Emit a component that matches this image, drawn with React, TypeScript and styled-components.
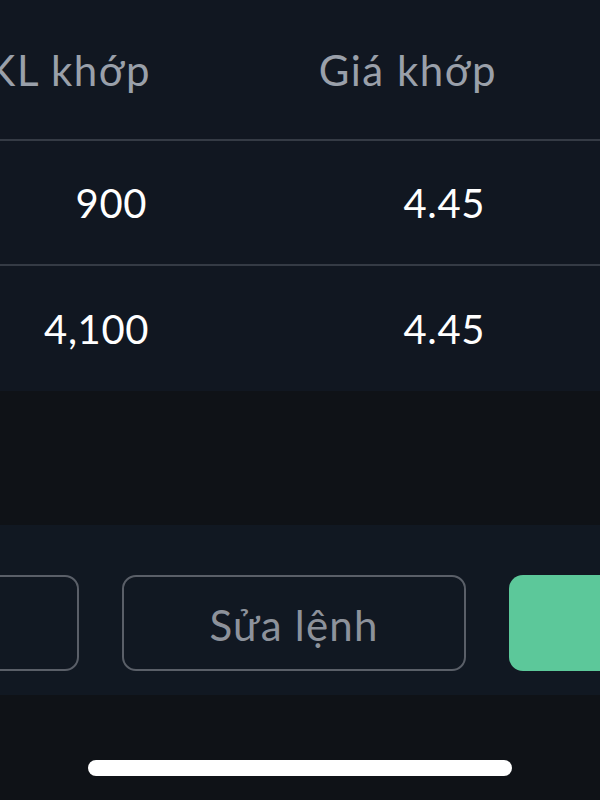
import React from "react";
import styled, { createGlobalStyle } from "styled-components";

const Global = createGlobalStyle`
  html, body { margin: 0; padding: 0; background: #0f1217; }
  * { box-sizing: border-box; }
`;

const Page = styled.div`
  width: 600px;
  height: 800px;
  overflow: hidden;
  background: #0f1217;
  font-family: Lato, "Noto Sans", sans-serif;
  display: flex;
  flex-direction: column;
`;

const Table = styled.div`
  background: #111721;
  display: flex;
  flex-direction: column;
`;

const Row = styled.div<{ $h: number; $divider?: boolean }>`
  height: ${(p) => p.$h}px;
  display: grid;
  grid-template-columns: 152px 346px 1fr;
  align-items: center;
  border-bottom: ${(p) => (p.$divider ? "2px solid #353b45" : "none")};
`;

const Cell = styled.div<{ $head?: boolean; $pad?: number }>`
  justify-self: end;
  white-space: nowrap;
  font-size: ${(p) => (p.$head ? 42 : 40)}px;
  color: ${(p) => (p.$head ? "#9aa0aa" : "#ffffff")};
  padding-right: ${(p) => p.$pad ?? 0}px;
  letter-spacing: ${(p) => (p.$head ? 1.5 : 0.6)}px;
`;

const Spacer = styled.div`
  height: 134px;
  background: #0f1217;
`;

const ActionBar = styled.div`
  height: 170px;
  background: #111822;
  display: flex;
  align-items: flex-start;
  gap: 43px;
  padding-top: 50px;
  margin-left: -265px;
`;

const OutlineButton = styled.div`
  flex: 0 0 344px;
  height: 96px;
  border: 2px solid #5a5f68;
  border-radius: 14px;
  display: flex;
  align-items: center;
  justify-content: center;
  color: #8d929b;
  font-size: 42px;
  letter-spacing: 1.2px;
  padding-top: 4px;
`;

const PrimaryButton = styled.div`
  flex: 0 0 344px;
  height: 96px;
  border-radius: 14px;
  background: #5cc89a;
`;

const HomeArea = styled.div`
  flex: 1;
  display: flex;
  justify-content: center;
  padding-top: 65px;
`;

const HomeIndicator = styled.div`
  width: 424px;
  height: 16px;
  border-radius: 8px;
  background: #ffffff;
`;

export default function App() {
  return (
    <Page>
      <Global />
      <Table>
        <Row $h={141} $divider>
          <Cell $head $pad={1}>KL khớp</Cell>
          <Cell $head $pad={1}>Giá khớp</Cell>
        </Row>
        <Row $h={125} $divider>
          <Cell $pad={5}>900</Cell>
          <Cell $pad={13}>4.45</Cell>
        </Row>
        <Row $h={125}>
          <Cell $pad={3}>4,100</Cell>
          <Cell $pad={13}>4.45</Cell>
        </Row>
      </Table>
      <Spacer />
      <ActionBar>
        <OutlineButton />
        <OutlineButton>Sửa lệnh</OutlineButton>
        <PrimaryButton />
      </ActionBar>
      <HomeArea>
        <HomeIndicator />
      </HomeArea>
    </Page>
  );
}
